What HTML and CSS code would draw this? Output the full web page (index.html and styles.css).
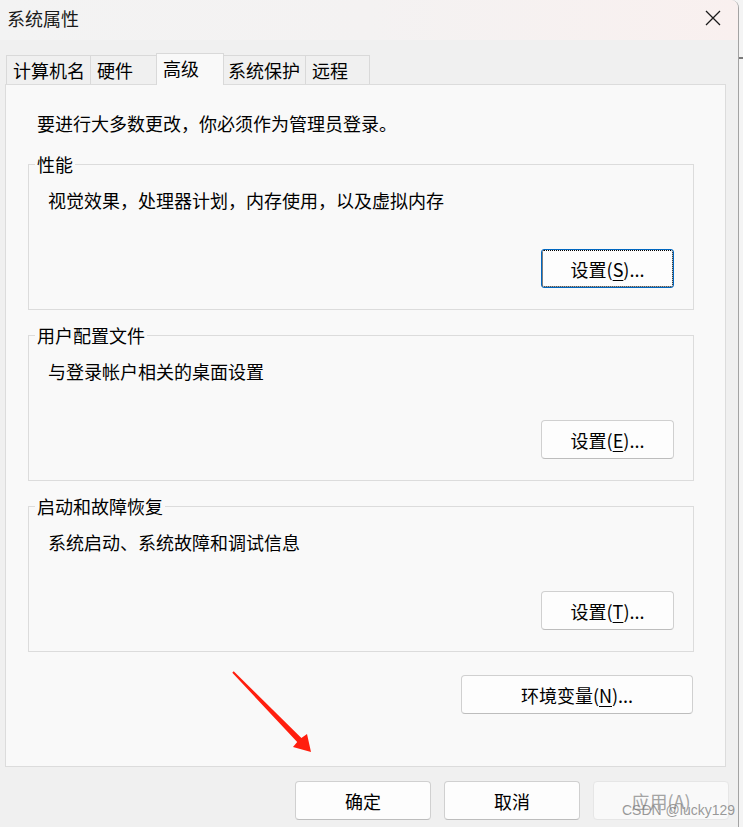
FILE: index.html
```html
<!DOCTYPE html>
<html lang="zh-CN">
<head>
<meta charset="utf-8">
<title>系统属性</title>
<link rel="stylesheet" href="styles.css">
</head>
<body>
<div class="window">
  <header class="titlebar">
    <span class="title">系统属性</span>
    <svg class="close" width="16" height="16" viewBox="0 0 16 16"><path d="M1 1 L15 15 M15 1 L1 15" stroke="#1a1a1a" stroke-width="1.3" fill="none"/></svg>
  </header>
  <div class="content">
    <div class="tabs">
      <div class="tab tab-1">计算机名</div>
      <div class="tab tab-2">硬件</div>
      <div class="tab tab-3 selected">高级</div>
      <div class="tab tab-4">系统保护</div>
      <div class="tab tab-5">远程</div>
    </div>
    <div class="panel">
      <p class="intro">要进行大多数更改，你必须作为管理员登录。</p>
      <fieldset class="group">
        <legend>性能</legend>
        <p class="desc">视觉效果，处理器计划，内存使用，以及虚拟内存</p>
        <div class="row"><button class="btn btn-set focused">设置(<u>S</u>)...</button></div>
      </fieldset>
      <fieldset class="group">
        <legend>用户配置文件</legend>
        <p class="desc">与登录帐户相关的桌面设置</p>
        <div class="row"><button class="btn btn-set">设置(<u>E</u>)...</button></div>
      </fieldset>
      <fieldset class="group">
        <legend>启动和故障恢复</legend>
        <p class="desc">系统启动、系统故障和调试信息</p>
        <div class="row"><button class="btn btn-set">设置(<u>T</u>)...</button></div>
      </fieldset>
      <div class="env-row"><button class="btn btn-env">环境变量(<u>N</u>)...</button></div>
    </div>
    <div class="footer">
      <button class="btn btn-foot">确定</button>
      <button class="btn btn-foot">取消</button>
      <button class="btn btn-foot disabled">应用(A)</button>
    </div>
  </div>
</div>
<div class="edge-mark"></div>
<svg class="arrow" width="95" height="95" viewBox="0 0 95 95"><polygon points="7.3,7.7 8.7,6.3 76.4,72.9 82,69 86,87 68,82 72.2,77.1" fill="#ff1e0e"/></svg>
<div class="watermark">CSDN @lucky129</div>
</body>
</html>
```

FILE: styles.css
```css
html, body {
  margin: 0;
  padding: 0;
}
body {
  width: 743px;
  height: 827px;
  background: #f4f4f4;
  font-family: "Noto Sans CJK SC", "Microsoft YaHei", sans-serif;
  font-size: 18px;
  color: #000;
  position: relative;
  overflow: hidden;
}
.window {
  width: 738px;
  height: 827px;
  background: #f0f0f0;
  border-right: 1px solid #a3a3a3;
  border-top-right-radius: 8px;
  overflow: hidden;
}
.titlebar {
  height: 40px;
  background: linear-gradient(90deg, #f3f3f3 0%, #f4f2f2 50%, #f9f0ef 100%);
  display: flex;
  align-items: flex-start;
  justify-content: space-between;
  box-sizing: border-box;
  padding: 6px 17px 0 7px;
}
.title {
  line-height: 24px;
  color: #1a1a1a;
}
.close {
  margin-top: 4px;
}
.content {
  padding: 0 12px 0 5px;
}
.tabs {
  margin-top: 13px;
  height: 31px;
  display: flex;
  align-items: flex-end;
  padding-left: 1px;
}
.tab {
  box-sizing: border-box;
  height: 29px;
  border: 1px solid #d9d9d9;
  border-right: none;
  border-bottom: none;
  background: #f0f0f0;
  line-height: 24px;
  padding: 2px 0 0 6px;
  white-space: nowrap;
}
.tab-1 { width: 84px; }
.tab-2 { width: 66px; }
.tab-3 { width: 68px; }
.tab-4 { width: 82px; padding-left: 4px; }
.tab-5 { width: 65px; border-right: 1px solid #d9d9d9; }
.tab.selected {
  height: 32px;
  margin-bottom: -1px;
  background: #f9f9f9;
  border-right: 1px solid #d9d9d9;
  margin-right: -1px;
  padding-top: 2px;
  position: relative;
  z-index: 2;
}
.panel {
  background: #f9f9f9;
  border: 1px solid #dcdcdc;
  padding: 26px 31px 52px 22px;
}
.intro {
  margin: 0 0 17px 9px;
  line-height: 24px;
}
.group {
  margin: 0 0 13px 0;
  padding: 0 19px 21px 0;
  border: 1px solid #dcdcdc;
  min-width: 0;
}
.group legend {
  margin-left: 6px;
  padding: 0 2px;
  line-height: 24px;
}
.desc {
  margin: 12px 0 0 19px;
  line-height: 24px;
}
.row {
  display: flex;
  justify-content: flex-end;
  margin-top: 37px;
}
.btn {
  font-family: inherit;
  font-size: 18px;
  color: #000;
  height: 39px;
  box-sizing: border-box;
  background: #fdfdfd;
  border: 1px solid #d0d0d0;
  border-bottom-color: #bdbdbd;
  border-radius: 4px;
  padding: 0;
  line-height: 24px;
  display: flex;
  align-items: center;
  justify-content: center;
}
.btn u {
  text-decoration-thickness: 1px;
  text-underline-offset: 3px;
}
.btn-set {
  width: 133px;
}
.btn.focused {
  border: 1px solid #0067c0;
  border-radius: 3px;
  outline: 1px dotted #000;
  outline-offset: -2px;
}
.env-row {
  display: flex;
  justify-content: flex-end;
  margin-top: 23px;
  margin-right: 1px;
}
.group:last-of-type {
  margin-bottom: 0;
}
.btn-env {
  width: 232px;
}
.footer {
  display: flex;
  justify-content: flex-end;
  gap: 13px;
  margin-top: 14px;
  margin-right: -3px;
}
.btn-foot {
  width: 136px;
}
.btn.disabled {
  background: #f9f9f9;
  border-color: #e6e6e6;
  color: #a4a4a4;
}
.edge-mark {
  position: absolute;
  left: 739px;
  top: 57px;
  width: 4px;
  height: 2px;
  background: #7a7a7a;
}
.arrow {
  position: absolute;
  left: 225px;
  top: 665px;
}
.watermark {
  position: absolute;
  left: 622px;
  top: 801px;
  font-family: "Liberation Sans", Arial, sans-serif;
  font-size: 14px;
  line-height: 18px;
  color: rgba(120, 120, 120, 0.75);
  white-space: nowrap;
}
```
